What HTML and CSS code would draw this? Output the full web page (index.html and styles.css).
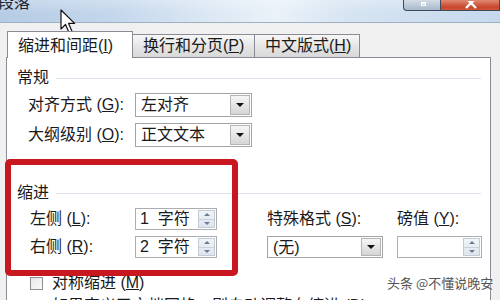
FILE: index.html
```html
<!DOCTYPE html>
<html lang="zh-CN">
<head>
<meta charset="utf-8">
<title>段落</title>
<link rel="stylesheet" href="styles.css">
</head>
<body>
<div class="titlebar">
  <span class="title">段落</span>
  <div class="winbtns">
    <span class="wb wb-max"><i class="max-ico"></i></span>
    <span class="wb wb-close"><svg class="close-ico" width="14" height="8" viewBox="0 0 14 8"><path d="M2 -3 L12 7 M12 -3 L2 7" stroke="#fff" stroke-width="2.4" fill="none"/></svg></span>
  </div>
</div>
<div class="dialog">
  <div class="tabs">
    <div class="tab tab-1 active">缩进和间距(<u>I</u>)</div>
    <div class="tab tab-2">换行和分页(<u>P</u>)</div>
    <div class="tab tab-3">中文版式(<u>H</u>)</div>
  </div>
  <div class="panel">
    <div class="section"><span>常规</span><i class="rule"></i></div>
    <div class="form">
      <span class="lbl">对齐方式 (<u>G</u>):</span>
      <div class="select w117"><span class="val">左对齐</span><b class="arrow"><i></i></b></div>
      <span class="lbl">大纲级别 (<u>O</u>):</span>
      <div class="select w117"><span class="val">正文文本</span><b class="arrow"><i></i></b></div>
    </div>
    <div class="section sec-indent"><span>缩进</span><i class="rule"></i></div>
    <div class="indent">
      <span class="lbl">左侧 (<u>L</u>):</span>
      <div class="spin w82"><span class="val">1&nbsp;&nbsp;字符</span><b class="spinbtn"><i class="up"></i><i class="down"></i></b></div>
      <span class="lbl">特殊格式 (<u>S</u>):</span>
      <span class="lbl">磅值 (<u>Y</u>):</span>
      <span class="lbl">右侧 (<u>R</u>):</span>
      <div class="spin w82"><span class="val">2&nbsp;&nbsp;字符</span><b class="spinbtn"><i class="up"></i><i class="down"></i></b></div>
      <div class="select w116"><span class="val">(无)</span><b class="arrow"><i></i></b></div>
      <div class="spin w85 empty"><span class="val"></span><b class="spinbtn"><i class="up"></i><i class="down"></i></b></div>
    </div>
    <div class="check first"><i class="box"></i><span>对称缩进 (<u>M</u>)</span></div>
    <div class="check"><i class="box"></i><span>如果定义了文档网格，则自动调整右缩进 (<u>D</u>)</span></div>
  </div>
</div>
<div class="highlight"></div>
<div class="watermark">头条 @不懂说晚安</div>
<svg class="cursor" width="18" height="26" viewBox="0 0 18 26">
  <path d="M1 1 L1 20 L5.5 15.5 L9 23.5 L12 22.2 L8.6 14.4 L14.6 14.4 Z" fill="#fff" stroke="#111" stroke-width="1.2" stroke-linejoin="round"/>
</svg>
</body>
</html>
```

FILE: styles.css
```css
* { box-sizing: border-box; margin: 0; padding: 0; }
html, body { width: 500px; height: 300px; overflow: hidden; }
body {
  position: relative;
  font-family: "Liberation Sans", "Noto Sans CJK SC", sans-serif;
  font-size: 16px;
  line-height: 20px;
  color: #1a1a1a;
  background: #f0f0f0;
}
u { text-decoration: underline; text-underline-offset: 1px; }

.titlebar {
  height: 23px;
  display: flex;
  align-items: flex-start;
  overflow: hidden;
  border-bottom: 1px solid #9fb0c3;
  background:
    linear-gradient(180deg, rgba(255,255,255,0.25), rgba(255,255,255,0) 60%),
    linear-gradient(90deg, #b6cce5 0%, #c3d6eb 22%, #dce8f4 42%, #eaf1f9 55%, #d6e4f2 70%, #c5d8ed 100%);
}
.title {
  margin: -7px 0 0 -2px;
  font-size: 16px;
  line-height: 20px;
  color: #1e2530;
}
.winbtns { margin-left: auto; display: flex; }
.wb {
  display: block;
  height: 11px;
  border: 1px solid #3e4b5d;
  border-top: 0;
  position: relative;
  overflow: hidden;
}
.wb-max {
  width: 37px;
  border-right: 0;
  border-bottom-left-radius: 4px;
  background: linear-gradient(180deg, #d3dde7, #a9b8c8);
}
.max-ico {
  position: absolute;
  left: 17px; top: 2px;
  width: 5px; height: 4px;
  border: 1px solid #fff;
  border-top: 2px solid #fff;
}
.wb-close {
  width: 60px;
  background: linear-gradient(180deg, #e08a70, #c8472d 70%, #cf5536);
}
.close-ico { position: absolute; left: 23px; top: 1px; }

.dialog { background: #f0f0f0; }
.tabs {
  height: 34px;
  padding: 8px 0 0 7px;
  display: flex;
  align-items: flex-end;
}
.tab {
  height: 23px;
  padding-left: 10px;
  border: 1px solid #898c95;
  border-bottom: 0;
  background: linear-gradient(180deg, #f7f7f7, #e4e4e4 55%, #d9d9d9);
  line-height: 22px;
  white-space: nowrap;
}
.tab.active {
  height: 27px;
  margin-bottom: -1px;
  position: relative;
  z-index: 1;
  background: #fff;
  line-height: 28px;
}
.tab-1 { width: 126px; }
.tab-2 { width: 122px; border-left: 0; }
.tab-3 { width: 106px; border-left: 1px solid #898c95; margin-left: -1px; }

.panel {
  margin-left: 6px;
  width: 485px;
  height: 260px;
  border: 1px solid #898c95;
  background: #fff;
  padding: 10px 9px 0 10px;
}
.section {
  display: flex;
  align-items: center;
  gap: 7px;
  height: 20px;
}
.rule { flex: 1; border-top: 1px solid #dde3ea; }
.sec-indent { margin-top: 36px; }

.lbl { white-space: nowrap; align-self: center; }

.form {
  margin: 5px 0 0 11px;
  display: grid;
  grid-template-columns: 107px 117px;
  grid-auto-rows: 24px;
  row-gap: 6px;
}

.select {
  display: flex;
  border: 1px solid #a4a4a4;
  background: #fff;
}
.select .val { flex: 1; padding-left: 5px; line-height: 21px; white-space: nowrap; }
.w117 { width: 117px; }
.w116 { width: 116px; }
.arrow {
  width: 20px;
  margin: 1px;
  border: 1px solid #b4b4b4;
  background: linear-gradient(180deg, #f6f6f6, #e2e2e2 60%, #d5d5d5);
  display: flex;
  align-items: center;
  justify-content: center;
}
.arrow i {
  width: 0; height: 0;
  border-left: 4px solid transparent;
  border-right: 4px solid transparent;
  border-top: 4px solid #111;
}

.indent {
  margin: 5px 0 0 13px;
  display: grid;
  grid-template-columns: 105px 132px 130px 85px;
  grid-auto-rows: 22px;
  row-gap: 6px;
}
.spin {
  display: flex;
  border: 1px solid #abadb3;
  background: #fff;
}
.spin .val { flex: 1; padding-left: 4px; line-height: 20px; white-space: nowrap; }
.w82 { width: 82px; }
.w85 { width: 85px; }
.spinbtn {
  width: 17px;
  margin: 1px 1px 1px 0;
  display: flex;
  flex-direction: column;
  border: 1px solid #c3cbd6;
  background: linear-gradient(180deg, #f1f4f8, #dfe5ec);
}
.spinbtn i {
  flex: 1;
  display: flex;
  align-items: center;
  justify-content: center;
}
.spinbtn i::before {
  content: "";
  width: 0; height: 0;
  border-left: 3px solid transparent;
  border-right: 3px solid transparent;
}
.spinbtn .up { border-bottom: 1px solid #c9d1db; }
.spinbtn .up::before { border-bottom: 3px solid #6a7d94; }
.spinbtn .down::before { border-top: 3px solid #6a7d94; }

.check {
  display: flex;
  align-items: center;
  gap: 9px;
  height: 20px;
  margin: 3px 0 0 13px;
}
.check.first { margin-top: 15px; }
.box {
  width: 13px; height: 13px;
  border: 1px solid #8e8f8f;
  background: linear-gradient(135deg, #e6e6e6, #fafafa);
}
.check span { white-space: nowrap; }

.highlight {
  position: absolute;
  left: 5px; top: 159px;
  width: 233px; height: 117px;
  border: 6px solid #c8171e;
  border-radius: 5px;
}
.watermark {
  position: absolute;
  left: 387px; top: 274px;
  font-family: "Noto Sans CJK SC", sans-serif;
  font-size: 13px;
  line-height: 18px;
  color: #555;
  white-space: nowrap;
  text-shadow: 0 0 2px #fff;
}
.cursor { position: absolute; left: 60px; top: 9px; }
```
